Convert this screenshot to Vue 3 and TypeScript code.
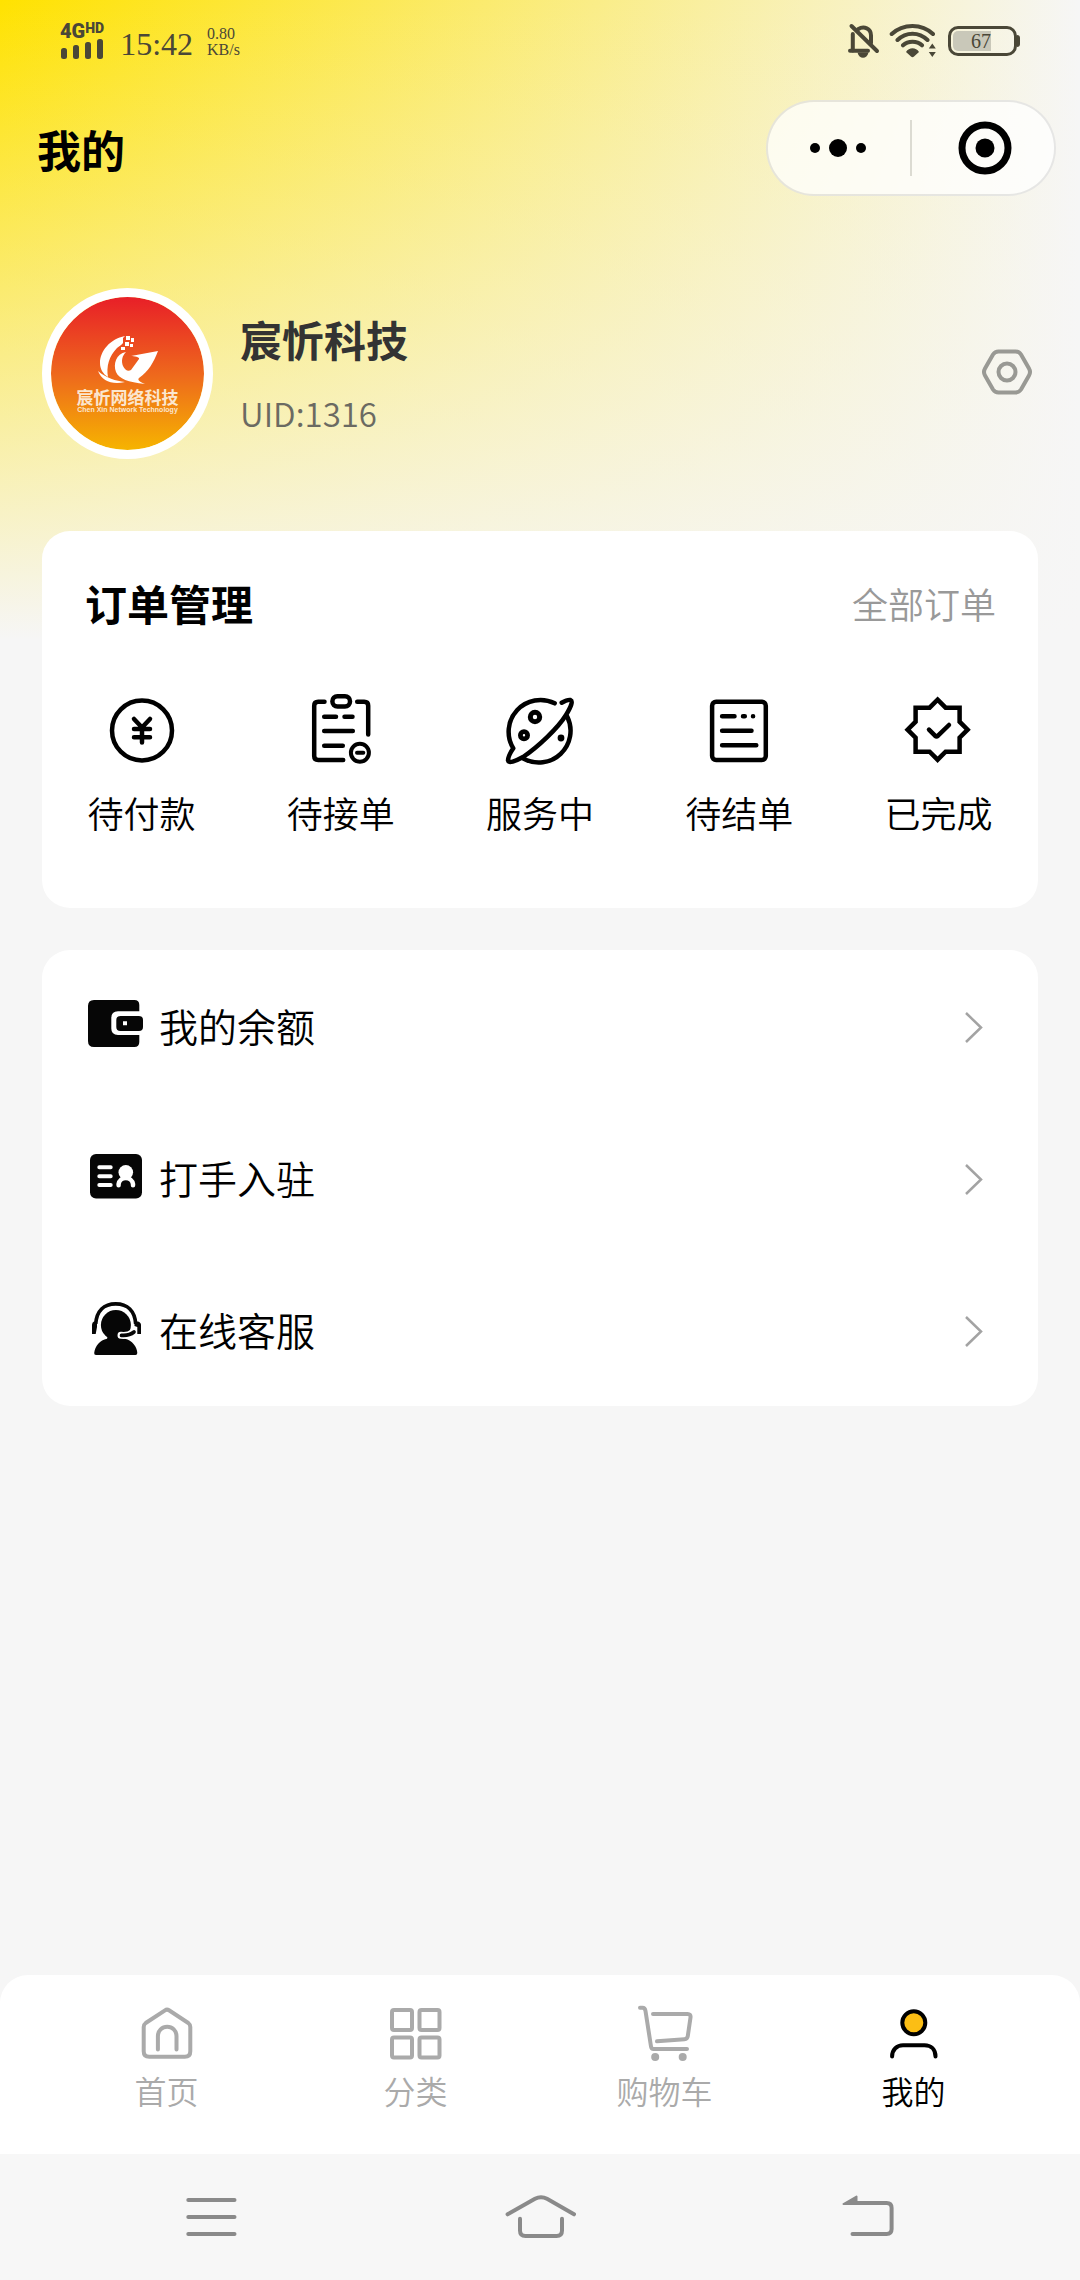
<script setup lang="ts">
type OrderKey = 'pay' | 'accept' | 'serving' | 'settle' | 'done'
type MenuKey = 'wallet' | 'join' | 'service'
type TabKey = 'home' | 'category' | 'cart' | 'me'

const orders: { key: OrderKey; label: string }[] = [
  { key: 'pay', label: '待付款' },
  { key: 'accept', label: '待接单' },
  { key: 'serving', label: '服务中' },
  { key: 'settle', label: '待结单' },
  { key: 'done', label: '已完成' },
]

const menus: { key: MenuKey; label: string }[] = [
  { key: 'wallet', label: '我的余额' },
  { key: 'join', label: '打手入驻' },
  { key: 'service', label: '在线客服' },
]

const tabs: { key: TabKey; label: string }[] = [
  { key: 'home', label: '首页' },
  { key: 'category', label: '分类' },
  { key: 'cart', label: '购物车' },
  { key: 'me', label: '我的' },
]

const activeTab: TabKey = 'me'
</script>

<template>
  <div class="page">
    <div class="status">
      <div class="signal">
        <div class="network"><span>4G</span><span class="hd">HD</span></div>
        <svg width="44" height="20" viewBox="0 0 44 20" fill="currentColor" aria-hidden="true">
          <rect x="1" y="9" width="6" height="11" rx="2.5" />
          <rect x="13" y="6" width="6" height="14" rx="2.5" />
          <rect x="25" y="3" width="6" height="17" rx="2.5" />
          <rect x="37" y="0" width="6" height="20" rx="2.5" />
        </svg>
      </div>
      <span class="time">15:42</span>
      <div class="speed"><span>0.80</span><span>KB/s</span></div>
      <div class="status-right">
        <svg width="32" height="36" viewBox="0 0 32 36" fill="none" stroke="currentColor" stroke-width="4" stroke-linecap="round" aria-hidden="true">
          <path d="M3.5 3 29 28" />
          <path d="M4.8 11V27.5M10 6.2C16 2.600 23 5.500 23 12.500V20" />
          <path d="M2 27.700H20" />
          <path d="M9.500 29.500C11 36.500 19 36.500 20.500 29.500Z" fill="currentColor" stroke="none" />
        </svg>
        <svg class="wifi" width="48" height="36" viewBox="0 0 48 36" fill="none" stroke="currentColor" stroke-width="4" stroke-linecap="round" aria-hidden="true">
          <path d="M2.700 11C14 .2 33 .2 44 11M8.500 17C17 8.500 30 8.500 38.500 17M14 22.300C19 17.500 28 17.500 33 22.300" />
          <path d="M17 29C20 24 27 24 30 29L25 33.500Q23.500 35 22 33.500Z" fill="currentColor" stroke="none" />
          <path d="M43.300 20.500 46.800 25.500H39.800ZM43.300 34 39.800 29H46.800Z" fill="currentColor" stroke="none" />
        </svg>
        <div class="battery"><span class="battery-body"><span class="level">67</span></span><span class="nub"></span></div>
      </div>
    </div>

    <header class="navbar">
      <h1>我的</h1>
      <div class="capsule">
        <button type="button" aria-label="更多">
          <svg width="60" height="60" viewBox="0 0 60 60" aria-hidden="true">
            <circle cx="6" cy="30" r="5" /><circle cx="29" cy="30" r="9" /><circle cx="52" cy="30" r="5" />
          </svg>
        </button>
        <span class="divider"></span>
        <button type="button" aria-label="关闭">
          <svg width="60" height="60" viewBox="0 0 60 60" aria-hidden="true">
            <circle cx="32" cy="30" r="23" fill="none" stroke="#000" stroke-width="7" /><circle cx="32" cy="30" r="9.500" />
          </svg>
        </button>
      </div>
    </header>

    <section class="profile">
      <div class="avatar">
        <svg width="60" height="50" viewBox="0 0 60 50" fill="#fff" aria-hidden="true">
          <path d="M27 2C12 5 2 17 2 29C2 35 5 40 10 43C8 33 11 22 19 14C21 12 24 11 25 9V4Z" />
          <path d="M28 18C18 20 15 30 18 38C21 45 30 48 47 50C42 48 39 46 41 44C50 38 56 28 60 17L33 22C36 22 42 23 41 25L33 36C30 38 27 36 25 32C23 27 24 22 28 18Z" />
          <path d="M0 37C4 47 14 51 27 48C18 47 8 44 0 37Z" />
          <path d="M28 2H32V6H28ZM33 4H36V8H33ZM27 8H31V12H27ZM32 10H35V13H32ZM23 13H27V16H23Z" />
        </svg>
        <span class="brand-cn">宸忻网络科技</span>
        <span class="brand-en">Chen Xin Network Technology</span>
      </div>
      <div class="who">
        <h2>宸忻科技</h2>
        <p>UID:1316</p>
      </div>
      <button class="settings" type="button" aria-label="设置">
        <svg width="52" height="52" viewBox="0 0 52 52" fill="none" stroke="#999994" stroke-width="4" stroke-linejoin="round" aria-hidden="true">
          <path d="M17.500 5.500H34.500Q38 5.500 40 8.500L48 22.500Q50 26 48 29.500L40 43.500Q38 46.500 34.500 46.500H17.500Q14 46.500 12 43.500L4 29.500Q2 26 4 22.500L12 8.500Q14 5.500 17.500 5.500Z" />
          <circle cx="26" cy="26" r="8.500" />
        </svg>
      </button>
    </section>

    <main>
      <section class="card orders">
        <div class="orders-head">
          <h2>订单管理</h2>
          <a href="#orders">全部订单</a>
        </div>
        <div class="order-grid">
          <a v-for="o in orders" :key="o.key" :href="'#' + o.key">
            <svg width="80" height="80" viewBox="0 0 80 80" fill="none" stroke="#000" stroke-width="4.500" stroke-linecap="round" stroke-linejoin="round" aria-hidden="true">
              <g v-if="o.key === 'pay'">
                <circle cx="40" cy="39.500" r="30" />
                <path d="M32 28 40 36.500 48 28M40 36.500V51.500M32 38H48M32 46.300H48" />
              </g>
              <g v-else-if="o.key === 'accept'">
                <path d="M23.500 10.700H17.200Q13.200 10.700 13.200 14.700V65Q13.200 69 17.200 69H42.200M56.200 10.700H63.200Q67.200 10.700 67.200 14.700V43.500" />
                <rect x="31.400" y="5.200" width="17.600" height="10.300" rx="5" />
                <path d="M23.200 25.700H35M43.500 25.700H51.500M23.200 40H51.800M23.200 54.700H41.800" />
                <circle cx="58.900" cy="61.700" r="9" stroke-width="4" />
                <path d="M56 61.700H62.300" stroke-width="4" />
              </g>
              <g v-else-if="o.key === 'serving'">
                <path d="M54.700 12.300A31.800 31.800 0 0 0 13.300 57.300C9 63.500 8 67 8 69.500C8.500 72.500 15 70.500 23 66C38 56 58 37 66 24C71.500 15 73 10 70.500 9C68.500 8.500 65 9.800 61.700 11.700" />
                <path d="M67.300 25.700A31.800 31.800 0 0 1 23.300 67.500" />
                <circle cx="35" cy="26" r="4.700" stroke-width="5" />
                <circle cx="24" cy="44.300" r="3.600" stroke-width="4.800" />
                <circle cx="61" cy="47" r="3.400" fill="#000" stroke="none" />
              </g>
              <g v-else-if="o.key === 'settle'">
                <rect x="13.100" y="10.700" width="53.700" height="58.300" rx="4" />
                <path d="M23.100 25.200H35.500M44 25.200H45.800M54 25.200H54.100M23.100 39.700H52.500M23.100 54.300H57.300" />
              </g>
              <g v-else>
                <path d="M39.600 8.700 47.600 16.700H61.600V30.700L69.600 38.700 61.600 46.700V60.700H47.600L39.600 68.700 31.600 60.700H17.600V46.700L9.600 38.700 17.600 30.700V16.700H31.600Z" stroke-linejoin="miter" />
                <path d="M31 38.700 37 44.700Q38.500 46 40 44.700L51 34" />
              </g>
            </svg>
            <span>{{ o.label }}</span>
          </a>
        </div>
      </section>

      <nav class="card menu" aria-label="服务">
        <a v-for="m in menus" :key="m.key" :href="'#' + m.key">
          <svg class="menu-icon" width="58" height="58" viewBox="0 0 58 58" fill="#060606" aria-hidden="true">
            <g v-if="m.key === 'wallet'">
              <path d="M8 6H48.300Q53.300 6 53.300 11V17.300H32Q25.300 17.300 25.300 24V34.500Q25.300 41 32 41H53.300V48Q53.300 53 48.300 53H8Q2 53 2 47V12Q2 6 8 6Z" />
              <path fill-rule="evenodd" d="M34.500 22H53Q57 22 57 26V33Q57 37 53 37H34.500Q30.300 37 30.300 33V26Q30.300 22 34.500 22ZM37 27.300V31.300H41V27.300Z" />
            </g>
            <g v-else-if="m.key === 'join'">
              <rect x="4" y="8" width="52" height="44.500" rx="6" />
              <path d="M13.300 21.300H24.700M13.300 30.300H24.700M13.300 39H24.700" stroke="#fff" stroke-width="4" stroke-linecap="round" />
              <circle cx="39.800" cy="26.300" r="7.300" fill="#fff" />
              <path d="M32.600 39.300V38A7.300 7.300 0 0 1 47 38V39.300" fill="none" stroke="#fff" stroke-width="4.500" stroke-linecap="round" />
            </g>
            <g v-else>
              <path d="M9.700 26C10.500 13 18 5.800 29.700 5.800S48.900 13 49.700 26" fill="none" stroke="#060606" stroke-width="3.700" />
              <path d="M8 23.500H11V29L9.700 36H6V27Q6 24 8 23.500ZM48.500 23.500H52Q55 24.500 55 27V36H51.300V29L48.500 28Z" />
              <circle cx="29.900" cy="27" r="15" />
              <path d="M22 38H37L39 40.700C46 42 51.300 49 51.300 55Q51.300 57 49.500 57H10Q8 57 8.200 55C9 48 14 42 21 40.700Z" />
              <path d="M35 37.300Q43 38 46.500 34.500" fill="none" stroke="#fff" stroke-width="7" stroke-linecap="round" />
              <path d="M35.500 37.300Q43 38 48 34" fill="none" stroke="#060606" stroke-width="3.700" stroke-linecap="round" />
            </g>
          </svg>
          <span>{{ m.label }}</span>
          <svg class="chevron" width="20" height="32" viewBox="0 0 20 32" fill="none" stroke="#a3a3a3" stroke-width="2.500" aria-hidden="true">
            <path d="M2 2 17 16.500 2 31" />
          </svg>
        </a>
      </nav>
    </main>

    <nav class="tabbar" aria-label="主导航">
      <a v-for="t in tabs" :key="t.key" :href="'#' + t.key" :class="{ active: t.key === activeTab }">
        <svg width="60" height="60" viewBox="0 0 60 60" fill="none" stroke="currentColor" stroke-width="4" stroke-linecap="round" stroke-linejoin="round" aria-hidden="true">
          <g v-if="t.key === 'home'">
            <path d="M6.700 24Q6.700 21.500 8.700 20L28 7.300Q30 6 32 7.300L51.300 20Q53.300 21.500 53.300 24V48.200Q53.300 53.700 47.800 53.700H12.200Q6.700 53.700 6.700 48.200Z" />
            <path d="M20.900 46.500V33A9.300 9.300 0 0 1 39.500 33V46.500" />
          </g>
          <g v-else-if="t.key === 'category'">
            <rect x="6" y="7" width="20" height="20" rx="2" /><rect x="33.500" y="7" width="20" height="20" rx="2" />
            <rect x="6" y="34.500" width="20" height="20" rx="2" /><rect x="33.500" y="34.500" width="20" height="20" rx="2" />
          </g>
          <g v-else-if="t.key === 'cart'">
            <path d="M5 4.700H7.500Q10 4.700 10.500 8L16 43.500Q16.400 46 18.500 46H52" />
            <path d="M18 11H52.500Q56 11 55.500 14.500L52.800 33Q52.400 36 49.500 36.200L22 38.300" />
            <circle cx="20.200" cy="54" r="4" fill="currentColor" stroke="none" /><circle cx="47.700" cy="54" r="4" fill="currentColor" stroke="none" />
          </g>
          <g v-else>
            <circle cx="29.800" cy="19.700" r="11.500" fill="#fcbe14" />
            <path d="M8.100 53.500C8.100 46.500 13 42.300 19 42.300H40.500C47 42.300 51.500 46.500 51.500 53.500" />
          </g>
        </svg>
        <span>{{ t.label }}</span>
      </a>
    </nav>

    <div class="system">
      <button type="button" aria-label="最近任务">
        <svg width="72" height="48" viewBox="0 0 72 48" aria-hidden="true"><path d="M13.300 7H59.500M13.300 24H59.500M13.300 41H59.500" /></svg>
      </button>
      <button type="button" aria-label="主屏幕">
        <svg width="72" height="48" viewBox="0 0 72 48" aria-hidden="true"><path d="M3.600 21.300 31 5.800Q37 2.500 43 5.800L70 21.300M16 25.700V37.500Q16 43 21.500 43H52.500Q58 43 58 37.500V25.700" /></svg>
      </button>
      <button type="button" aria-label="返回">
        <svg width="72" height="48" viewBox="0 0 72 48" aria-hidden="true"><path d="M22 10H53.600Q58.600 10 58.600 15V36Q58.600 41 53.600 41H19.500" /><path d="M10.500 11 23.500 3.500V11Z" fill="#8a8a8a" stroke-width="2" /></svg>
      </button>
    </div>
  </div>
</template>

<style>
body {
  background: #f6f6f6;
}
</style>

<style scoped>
.page {
  display: flex;
  flex-direction: column;
  min-height: 100vh;
  color: #000;
  font-family: "Noto Sans CJK SC", "Noto Sans", sans-serif;
  font-weight: 350;
  background:
    linear-gradient(to bottom, rgba(246, 246, 246, 0), #f6f6f6) top / 100% 640px no-repeat,
    linear-gradient(to right, #ffe200, #f6f6f6) top / 100% 640px no-repeat,
    #f6f6f6;
}
h1, h2, p {
  margin: 0;
}
a {
  color: inherit;
  text-decoration: none;
}
button {
  display: flex;
  padding: 0;
  border: 0;
  background: none;
}
svg {
  display: block;
  flex: none;
}

.status {
  display: flex;
  align-items: center;
  height: 82px;
  padding: 0 60px;
  color: #4a4737;
}
.signal {
  display: flex;
  flex-direction: column;
}
.network {
  display: flex;
  height: 16px;
  font: 900 20px/16px Roboto, sans-serif;
}
.hd {
  font-size: 14px;
  line-height: 10px;
}
.time {
  margin-left: 16px;
  padding-top: 6px;
  font: 32px/36px "Liberation Serif", serif;
}
.speed {
  display: flex;
  flex-direction: column;
  margin-left: 14px;
  padding-top: 2px;
  font: 16px/16px "Liberation Serif", serif;
}
.status-right {
  display: flex;
  align-items: center;
  margin-left: auto;
}
.wifi {
  margin-left: 9px;
}
.battery {
  display: flex;
  align-items: center;
  margin-left: 11px;
}
.battery-body {
  box-sizing: border-box;
  width: 69px;
  height: 30px;
  padding: 2px;
  border: 3px solid currentColor;
  border-radius: 10px;
}
.level {
  display: block;
  box-sizing: border-box;
  width: 38px;
  height: 20px;
  border-radius: 5px 0 0 5px;
  background: #c9c8b9;
  font: 20px/20px "Liberation Serif", serif;
  text-align: right;
}
.nub {
  width: 3px;
  height: 12px;
  border-radius: 0 3px 3px 0;
  background: currentColor;
}

.navbar {
  display: flex;
  align-items: center;
  justify-content: space-between;
  height: 132px;
  padding: 0 24px 0 37px;
}
h1 {
  padding-top: 2px;
  font-size: 44px;
  line-height: 64px;
  font-weight: 700;
}
.capsule {
  display: flex;
  align-items: center;
  box-sizing: border-box;
  width: 290px;
  height: 96px;
  border: 2px solid rgba(0, 0, 0, 0.09);
  border-radius: 48px;
  background: rgba(255, 255, 255, 0.75);
}
.capsule button {
  flex: 1;
  justify-content: center;
}
.divider {
  width: 2px;
  height: 56px;
  background: #dcdbd2;
}

.profile {
  display: flex;
  align-items: center;
  margin-top: 74px;
  padding: 0 47px 0 42px;
}
.avatar {
  display: flex;
  flex-direction: column;
  align-items: center;
  box-sizing: border-box;
  width: 171px;
  height: 171px;
  padding-top: 37px;
  border: 9px solid #fff;
  border-radius: 50%;
  background: linear-gradient(#e81f28, #ee6a1c 52%, #f6b400) padding-box;
  color: #fbe6cf;
  white-space: nowrap;
}
.brand-cn {
  margin-top: 4px;
  font-size: 17px;
  line-height: 18px;
  font-weight: 700;
}
.brand-en {
  font: 700 7px/8px "Liberation Sans", sans-serif;
}
.who {
  display: flex;
  flex-direction: column;
  gap: 20px;
  margin: 0 0 2px 27px;
}
.who h2 {
  color: #333;
  font-size: 42px;
  line-height: 60px;
}
.who p {
  color: #6b6a62;
  font-size: 33px;
  line-height: 48px;
}
.settings {
  margin: 0 0 4px auto;
}

main {
  display: flex;
  flex-direction: column;
  gap: 42px;
  margin: 72px 42px 42px;
}
.card {
  border-radius: 28px;
  background: #fff;
}
.orders {
  padding: 41px 0 70px;
}
.orders-head {
  display: flex;
  align-items: center;
  justify-content: space-between;
  padding: 0 42px 0 43px;
}
.orders-head h2 {
  font-size: 42px;
  line-height: 62px;
}
.orders-head a {
  color: #999;
  font-size: 36px;
}
.order-grid {
  display: grid;
  grid-template-columns: repeat(5, 1fr);
  margin-top: 57px;
}
.order-grid a {
  display: flex;
  flex-direction: column;
  align-items: center;
  gap: 15px;
  font-size: 36px;
  line-height: 52px;
}
.menu a {
  display: flex;
  align-items: center;
  box-sizing: border-box;
  height: 152px;
  padding: 0 54px 2px 44px;
  font-size: 39px;
}
.menu-icon {
  margin: 0 15px 4px 0;
}
.chevron {
  margin: 4px 0 0 auto;
}

.tabbar {
  display: grid;
  grid-template-columns: repeat(4, 1fr);
  margin-top: auto;
  padding: 28px 42px 43px;
  border-radius: 28px 28px 0 0;
  background: #fff;
}
.tabbar a {
  display: flex;
  flex-direction: column;
  align-items: center;
  gap: 6px;
  color: #aaa;
  font-size: 32px;
  line-height: 42px;
}
.tabbar .active {
  color: #000;
}
.system {
  display: grid;
  grid-template-columns: repeat(3, 1fr);
  height: 126px;
  padding: 0 46px;
  background: #f7f7f7;
}
.system button {
  align-items: center;
  justify-content: center;
}
.system svg {
  fill: none;
  stroke: #8a8a8a;
  stroke-width: 4;
  stroke-linecap: round;
  stroke-linejoin: round;
}
</style>
